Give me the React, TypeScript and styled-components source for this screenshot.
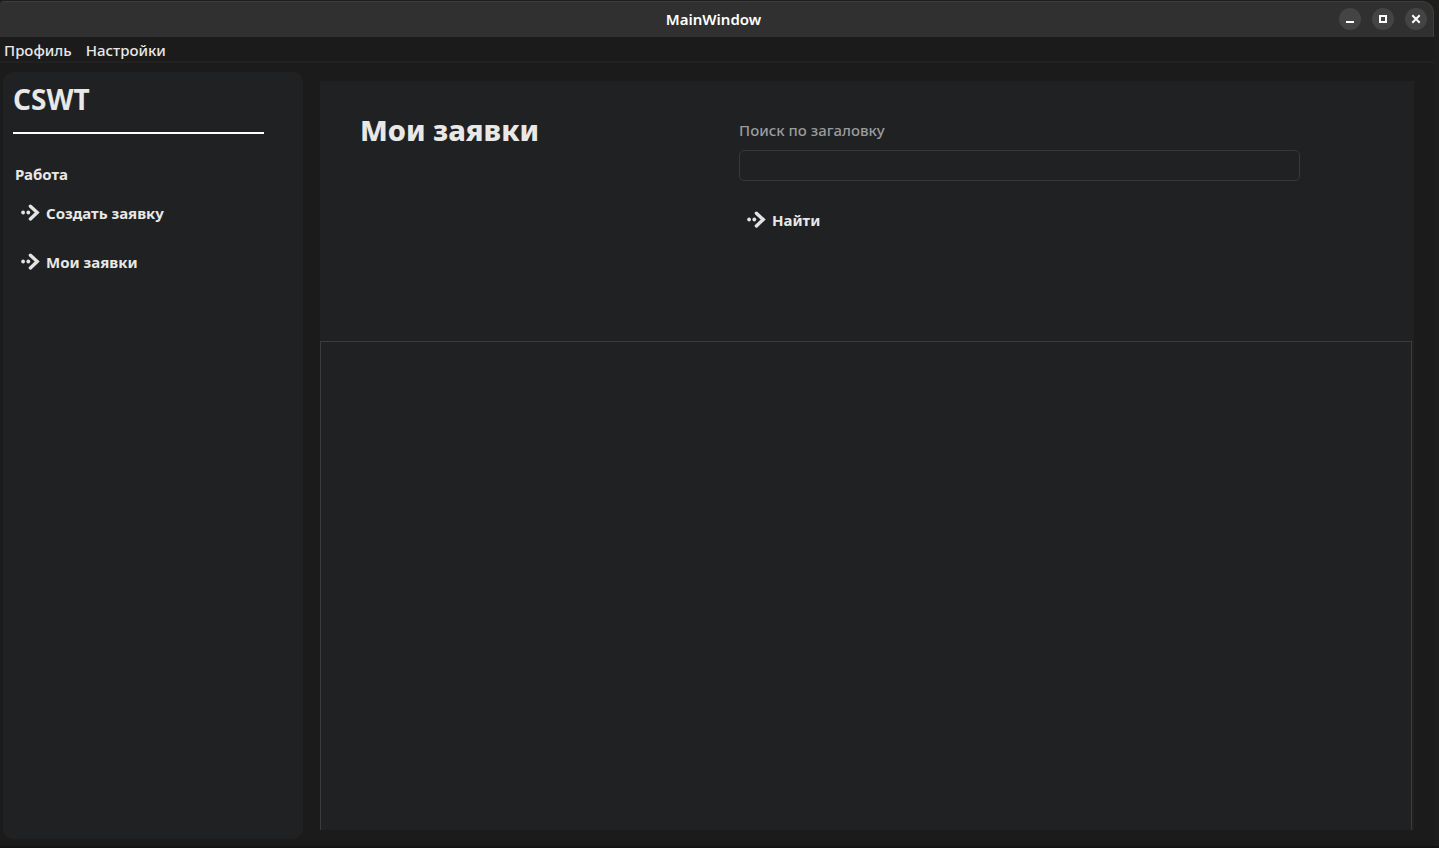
import React from "react";
import styled, { createGlobalStyle } from "styled-components";

const GlobalStyle = createGlobalStyle`
  *, *::before, *::after { box-sizing: border-box; }
  body {
    margin: 0;
    background: #1d1d1b;
    color: #e8e8e6;
    font-family: "Noto Sans", "Open Sans", sans-serif;
    font-size: 15px;
    line-height: 20px;
  }
  button, input { font: inherit; color: inherit; }
`;

const Desktop = styled.div`
  display: flex;
  min-height: 100vh;
  padding: 1px 5px 2px 0;
  background: linear-gradient(#141414, #141414) bottom / 100% 2px no-repeat, #1d1d1b;
`;

const Window = styled.div`
  flex: 1;
  display: flex;
  flex-direction: column;
  background: #1b1b1b;
  border-top-right-radius: 12px;
`;

const TitleBar = styled.header`
  display: grid;
  grid-template-columns: 1fr auto 1fr;
  align-items: center;
  height: 36px;
  padding: 0 6px 2px 0;
  background: #303030;
  border-top: 1px solid #3d3d3d;
  border-right: 1px solid #3d3d3d;
  border-radius: 4px 12px 0 0;
`;

const WindowTitle = styled.span`
  grid-column: 2;
  color: #ffffff;
  font-weight: 600;
`;

const WindowControls = styled.div`
  display: flex;
  justify-content: flex-end;
  gap: 11px;
`;

const ControlButton = styled.button`
  display: flex;
  width: 22px;
  height: 22px;
  padding: 0;
  border: 0;
  border-radius: 50%;
  background: #444444;
  color: #ffffff;
`;

const MenuBar = styled.nav`
  display: flex;
  gap: 14px;
  height: 26px;
  padding: 0 4px;
  border-bottom: 2px solid #212121;
`;

const MenuItem = styled.button`
  padding: 0;
  border: 0;
  background: none;
  font-weight: 500;
  line-height: 26px;
`;

const Workspace = styled.div`
  flex: 1;
  display: flex;
  gap: 17px;
  padding: 9px 20px 7px 3px;
`;

const Sidebar = styled.aside`
  flex: 0 0 300px;
  padding: 8px 10px;
  border-radius: 10px;
  background: #202123;
`;

const Brand = styled.h1`
  margin: 0;
  font-size: 28px;
  line-height: 38px;
`;

const Divider = styled.hr`
  width: 251px;
  height: 2px;
  margin: 14px 0 30px;
  border: 0;
  background: #ffffff;
`;

const SectionTitle = styled.h2`
  margin: 0 0 14px 2px;
  font-size: 15px;
  line-height: 20px;
`;

const NavList = styled.ul`
  display: flex;
  flex-direction: column;
  gap: 19px;
  margin: 0;
  padding: 0;
  list-style: none;
`;

const ActionButton = styled.button`
  display: flex;
  align-items: center;
  gap: 6px;
  height: 30px;
  padding: 0 8px;
  border: 0;
  background: none;
  font-weight: 700;
`;

const Main = styled.main`
  flex: 1;
  display: flex;
  flex-direction: column;
  margin: 9px 0;
  background: #202123;
`;

const PageHeader = styled.section`
  display: flex;
  min-height: 260px;
  padding: 28px 114px 20px 40px;
`;

const PageTitle = styled.h2`
  flex: 0 0 379px;
  margin: 0;
  font-size: 29px;
  font-weight: 800;
  line-height: 42px;
`;

const SearchForm = styled.form`
  flex: 1;
  display: flex;
  flex-direction: column;
  align-items: flex-start;
  padding-top: 11px;
`;

const SearchLabel = styled.label`
  margin-bottom: 10px;
  color: #9a9b9c;
  font-weight: 500;
`;

const SearchInput = styled.input`
  width: 100%;
  height: 31px;
  margin-bottom: 24px;
  padding: 0 8px;
  border: 1px solid #373839;
  border-radius: 5px;
  background: transparent;
  outline: none;
`;

const RequestList = styled.section`
  flex: 1;
  margin-right: 2px;
  border: 1px solid #3a3b3c;
  border-bottom: 0;
`;

const DottedArrow = () => (
  <svg width="19" height="18" viewBox="0 0 19 18" fill="none" aria-hidden="true">
    <circle cx="2.1" cy="8.5" r="1.9" fill="#e4e4e2" />
    <circle cx="7.3" cy="8.5" r="1.9" fill="#e4e4e2" />
    <path d="M9.4 2.2 16.2 8.5 9.4 14.9" stroke="#e4e4e2" strokeWidth="3.4" strokeLinecap="round" />
  </svg>
);

const ControlIcon = ({ children }: { children: React.ReactNode }) => (
  <svg width="22" height="22" viewBox="0 0 22 22" fill="none" stroke="currentColor" strokeWidth="2" aria-hidden="true">
    {children}
  </svg>
);

export default function App() {
  return (
    <>
      <GlobalStyle />
      <Desktop>
        <Window>
          <TitleBar>
            <WindowTitle>MainWindow</WindowTitle>
            <WindowControls>
              <ControlButton type="button" aria-label="Свернуть">
                <ControlIcon><path d="M7 14h8" /></ControlIcon>
              </ControlButton>
              <ControlButton type="button" aria-label="Развернуть">
                <ControlIcon><path d="M8 8h6v6H8z" /></ControlIcon>
              </ControlButton>
              <ControlButton type="button" aria-label="Закрыть">
                <ControlIcon><path d="m7.3 7.3 7.4 7.4m0-7.4-7.4 7.4" /></ControlIcon>
              </ControlButton>
            </WindowControls>
          </TitleBar>
          <MenuBar>
            <MenuItem type="button">Профиль</MenuItem>
            <MenuItem type="button">Настройки</MenuItem>
          </MenuBar>
          <Workspace>
            <Sidebar>
              <Brand>CSWT</Brand>
              <Divider />
              <SectionTitle>Работа</SectionTitle>
              <NavList>
                <li><ActionButton type="button"><DottedArrow />Создать заявку</ActionButton></li>
                <li><ActionButton type="button"><DottedArrow />Мои заявки</ActionButton></li>
              </NavList>
            </Sidebar>
            <Main>
              <PageHeader>
                <PageTitle>Мои заявки</PageTitle>
                <SearchForm onSubmit={(event) => event.preventDefault()}>
                  <SearchLabel htmlFor="search">Поиск по загаловку</SearchLabel>
                  <SearchInput id="search" type="text" />
                  <ActionButton type="submit"><DottedArrow />Найти</ActionButton>
                </SearchForm>
              </PageHeader>
              <RequestList />
            </Main>
          </Workspace>
        </Window>
      </Desktop>
    </>
  );
}
